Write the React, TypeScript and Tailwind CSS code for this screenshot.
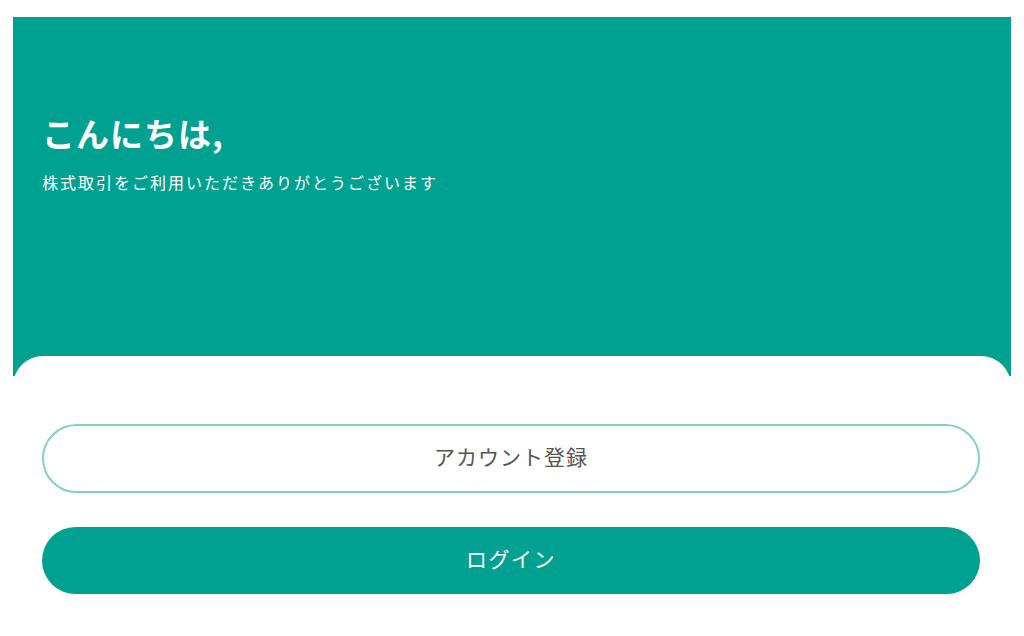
export default function App() {
  return (
    <div
      className="min-h-screen bg-white px-[13px] pt-[17px]"
      style={{ fontFamily: '"Noto Sans CJK JP", "Noto Sans", sans-serif' }}
    >
      {/* Header */}
      <div className="h-[359px] bg-[#00a190] pl-[29px] pt-[92px] text-white">
        <h1 className="text-[33px] font-bold leading-[48px] tracking-[1px]">こんにちは,</h1>
        <p className="mt-[15px] text-[16px] leading-[20px] tracking-[2px]">株式取引をご利用いただきありがとうございます</p>
      </div>

      {/* Card */}
      <div className="relative -mt-[20px] flex flex-col gap-[34px] rounded-t-[30px] bg-white pl-[29px] pr-[31px] pt-[68px]">
        <button className="h-[69px] w-full rounded-full border-2 border-[#80d2c8] bg-white pb-[3px] text-[21px] tracking-[1px] text-[#555555]">
          アカウント登録
        </button>
        <button className="h-[67px] w-full rounded-full bg-[#00a190] pb-[4px] text-[21px] tracking-[1.5px] text-white">
          ログイン
        </button>
      </div>
    </div>
  );
}
